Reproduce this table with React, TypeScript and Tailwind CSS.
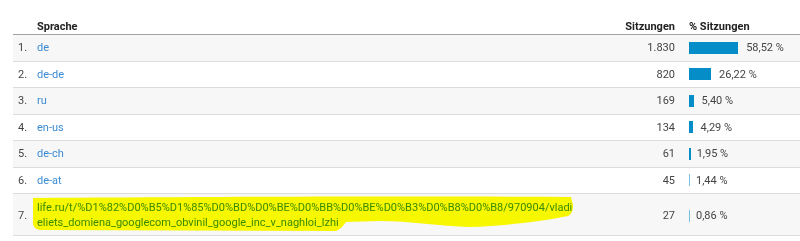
import React from "react";

const rows = [
  { n: "1.", lang: "de", s: "1.830", p: 58.52, pt: "58,52 %" },
  { n: "2.", lang: "de-de", s: "820", p: 26.22, pt: "26,22 %" },
  { n: "3.", lang: "ru", s: "169", p: 5.4, pt: "5,40 %" },
  { n: "4.", lang: "en-us", s: "134", p: 4.29, pt: "4,29 %" },
  { n: "5.", lang: "de-ch", s: "61", p: 1.95, pt: "1,95 %" },
  { n: "6.", lang: "de-at", s: "45", p: 1.44, pt: "1,44 %" },
];

function Bar({ p, pt }: { p: number; pt: string }) {
  const w = p * 0.84;
  const small = w < 1.5;
  return (
    <div className="flex items-center pl-[14px]">
      <div
        className="h-[12px] bg-[#058dc7]"
        style={{ width: small ? 1 : w, opacity: small ? 0.55 : 1 }}
      />
      <span className={(w < 2 ? "ml-[6px]" : "ml-[8px]") + " text-[#444]"}>{pt}</span>
    </div>
  );
}

export default function App() {
  return (
    <div className="relative w-[800px] h-[241px] bg-white overflow-hidden font-['Roboto',sans-serif] text-[11px] leading-none">
      <div className="ml-[13px]">
        <div className="flex h-[35px] items-end pb-[2px] border-b border-[#a3a3a3] font-bold text-[#222]">
          <div className="w-[24px]" />
          <div className="flex-1">Sprache</div>
          <div className="w-[100px] text-right">Sitzungen</div>
          <div className="w-[125px] pl-[14px]">% Sitzungen</div>
        </div>
        {rows.map((r, i) => (
          <div
            key={r.n}
            className={
              "flex h-[26.5px] items-center border-b border-[#dcdcdc] " +
              (i % 2 === 0 ? "bg-[#f7f7f7]" : "bg-white")
            }
          >
            <div className="w-[24px] pl-[5px] text-[#444]">{r.n}</div>
            <div className="flex-1 text-[#3b8bd4]">{r.lang}</div>
            <div className="w-[100px] text-right text-[#444]">{r.s}</div>
            <div className="w-[125px]">
              <Bar p={r.p} pt={r.pt} />
            </div>
          </div>
        ))}
        <div className="flex h-[42px] items-center border-b border-[#dcdcdc] bg-[#f7f7f7]">
          <div className="w-[24px] pl-[5px] text-[#444] pt-[2px]">7.</div>
          <div className="flex-1 text-[#3b8bd4] leading-[15px] pt-[1px]">
            <div className="whitespace-nowrap">
              life.ru/t/%D1%82%D0%B5%D1%85%D0%BD%D0%BE%D0%BB%D0%BE%D0%B3%D0%B8%D0%B8/970904/vladi
            </div>
            <div className="whitespace-nowrap">
              eliets_domiena_googlecom_obvinil_google_inc_v_naghloi_lzhi
            </div>
          </div>
          <div className="w-[100px] text-right text-[#444] pt-[2px]">27</div>
          <div className="w-[125px] pt-[2px]">
            <Bar p={0.86} pt="0,86 %" />
          </div>
        </div>
      </div>
      <svg
        className="absolute left-0 top-0 pointer-events-none mix-blend-multiply"
        width="800"
        height="241"
        viewBox="0 0 800 241"
      >
        <path
          d="M33 198 C200 197 400 196 571 197 L573 205 C573 210 572 214 568 216 C540 222 500 226 470 227 C440 226 410 221 380 221 L346 222 C343 226 341 229 336 231 L40 230 C35 229 33 227 33 222 Z"
          fill="#ffff00"
        />
      </svg>
    </div>
  );
}
